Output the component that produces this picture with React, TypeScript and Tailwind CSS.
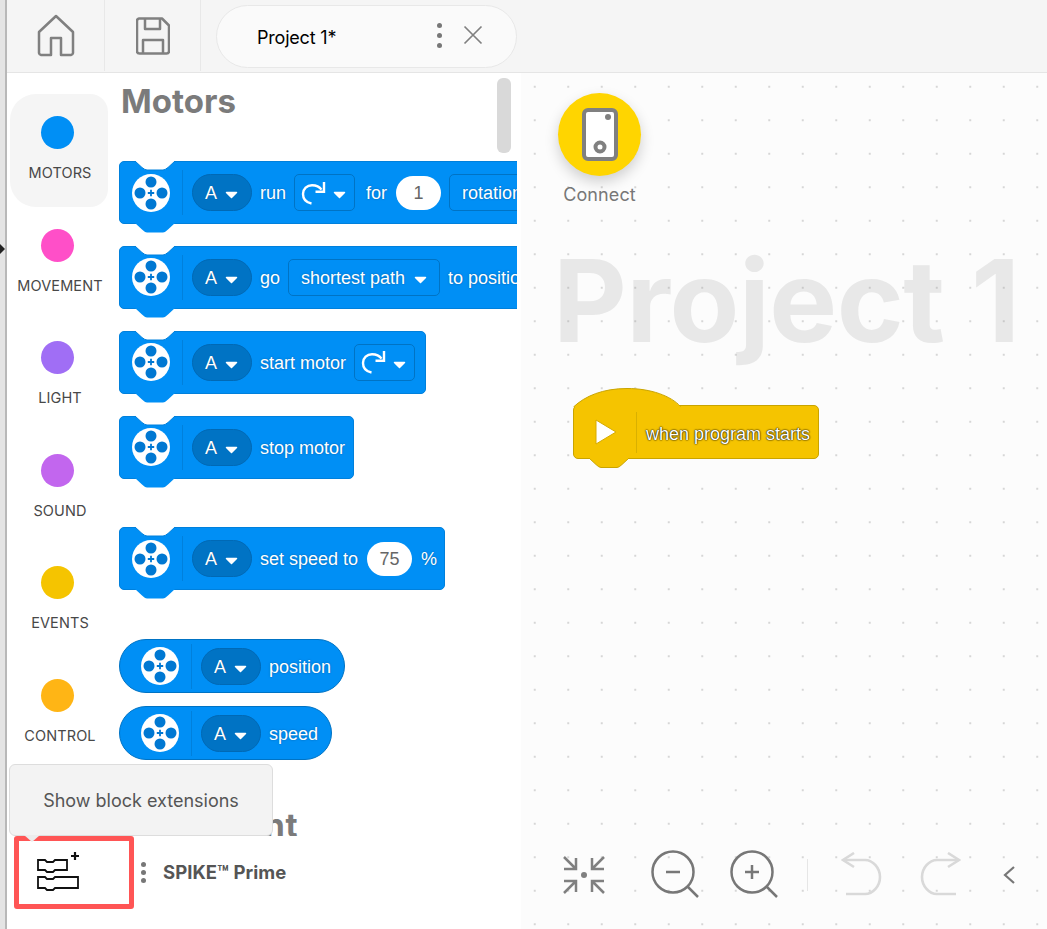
import React from "react";

const SANS = "font-['Inter','Liberation_Sans',sans-serif]";
const ARIAL = "font-['Liberation_Sans','Arial',sans-serif]";

const cats = [
  { n: "MOTORS", c: "bg-[#008ff5]", active: true },
  { n: "MOVEMENT", c: "bg-[#ff4fc8]" },
  { n: "LIGHT", c: "bg-[#a06ef5]" },
  { n: "SOUND", c: "bg-[#c266ee]" },
  { n: "EVENTS", c: "bg-[#f5c400]" },
  { n: "CONTROL", c: "bg-[#ffb515]" },
];

function MotorIcon() {
  return (
    <svg width="38" height="38" viewBox="0 0 38 38" className="shrink-0">
      <circle cx="19" cy="19" r="19" fill="#fff" />
      <circle cx="19" cy="8" r="5.5" fill="#0078d2" />
      <circle cx="19" cy="30" r="5.5" fill="#0078d2" />
      <circle cx="8" cy="19" r="5.5" fill="#0078d2" />
      <circle cx="30" cy="19" r="5.5" fill="#0078d2" />
      <path d="M19 15.8v6.4M15.8 19h6.4" stroke="#0078d2" strokeWidth="1.8" />
    </svg>
  );
}

function Caret() {
  return (
    <svg width="13" height="8" viewBox="0 0 13 8" className="shrink-0 mt-[5px]">
      <path d="M1.5 1.5h10L6.5 6.5z" fill="#fff" stroke="#fff" strokeWidth="1.5" strokeLinejoin="round" />
    </svg>
  );
}

function PortPill() {
  return (
    <div className="w-[60px] h-[37px] shrink-0 rounded-full bg-[#0073c4] border border-[#0069b5] flex items-center pl-[12px] gap-[7px]">
      <span className="text-white text-[18px] w-[13px] pt-[2px] [text-shadow:0_0_1px_#00508c]">A</span>
      <Caret />
    </div>
  );
}

function T({ children, cls = "" }: { children: React.ReactNode; cls?: string }) {
  return <span className={`text-white text-[18px] pt-[2px] whitespace-nowrap [text-shadow:0_0_2px_#0060a8] ${cls}`}>{children}</span>;
}

function Rotate() {
  return (
    <svg width="25" height="24" viewBox="0 0 24 24" className="shrink-0" fill="none" stroke="#fff" strokeWidth="2.4">
      <path d="M10 22.5C5 21.5 1.5 18 1.5 13 1.5 8 5.5 4.2 10.5 4.2c4 0 7.5 1.5 9.5 4.5" />
      <path d="M22.5 1v9.8H14" />
    </svg>
  );
}

function DirBox() {
  return (
    <div className="w-[61px] h-[37px] shrink-0 rounded-[5px] border border-[#0073c4] flex items-center pl-[6px] gap-[7px]">
      <Rotate />
      <Caret />
    </div>
  );
}

function Box({ children, w, pl = "" }: { children: React.ReactNode; w: string; pl?: string }) {
  return (
    <div className={`${w} ${pl} h-[37px] shrink-0 rounded-[5px] border border-[#0073c4] flex items-center gap-[9px]`}>
      {children}
    </div>
  );
}

function NumPill({ v, w }: { v: string; w: string }) {
  return (
    <div className={`${w} h-[34px] shrink-0 rounded-full bg-white flex items-center justify-center pt-[2px] text-[18px] text-[#666]`}>{v}</div>
  );
}

function Block({ w, mt, children }: { w: string; mt: string; children: React.ReactNode }) {
  return (
    <div className={`relative ${w} ${mt} h-[63px] shrink-0 rounded-[5px] bg-[#008ff5] border border-[#0080dc] flex items-center pl-[12px] ${ARIAL}`}>
      <svg width="40" height="10" viewBox="0 0 40 10" className="absolute -top-px left-[15px]">
        <path d="M0 0h40l-7 6.5Q30 9 28 9H12Q10 9 7 6.5z" fill="#fff" />
        <path d="M0 0 7 6.5Q10 9 12 9H28Q30 9 33 6.5L40 0" fill="none" stroke="#0080dc" />
      </svg>
      <svg width="40" height="10" viewBox="0 0 40 10" className="absolute -bottom-[10px] left-[15px]">
        <path d="M0 0h40l-7 6.5Q30 9.5 28 9.5H12Q10 9.5 7 6.5z" fill="#008ff5" />
      </svg>
      <MotorIcon />
      <div className="w-px h-[45px] bg-[#0080dc] ml-[12px] mr-[9px] shrink-0" />
      {children}
    </div>
  );
}

function Reporter({ w, mt, children }: { w: string; mt: string; children: React.ReactNode }) {
  return (
    <div className={`${w} ${mt} h-[54px] shrink-0 rounded-full bg-[#008ff5] border border-[#0073c4] flex items-center pl-[21px] ${ARIAL}`}>
      <MotorIcon />
      <div className="w-px h-[45px] bg-[#0080dc] ml-[12px] mr-[9px] shrink-0" />
      <PortPill />
      <T cls="ml-[8px]">{children}</T>
    </div>
  );
}

function Palette() {
  return (
    <div className="relative w-[408px] h-full overflow-hidden bg-white pl-[10px] shrink-0">
      <h2 className={`${SANS} text-[33px] leading-[40px] font-bold text-[#7b7b7b] ml-[2px] mt-[8px]`}>Motors</h2>
      <div className="w-[600px] flex flex-col mt-[40px]">
        <Block w="w-[600px]" mt="mt-0">
          <PortPill />
          <T cls="ml-[8px]">run</T>
          <div className="ml-[8px]"><DirBox /></div>
          <T cls="ml-[11px]">for</T>
          <div className="ml-[9px]"><NumPill v="1" w="w-[45px]" /></div>
          <div className="ml-[8px]"><Box w="w-[110px]" pl="pl-[12px]"><T>rotations</T></Box></div>
        </Block>
        <Block w="w-[600px]" mt="mt-[21.5px]">
          <PortPill />
          <T cls="ml-[8px]">go</T>
          <div className="ml-[8px]"><Box w="w-[152px]" pl="pl-[12px]"><T>shortest path</T><Caret /></Box></div>
          <T cls="ml-[8px]">to position</T>
        </Block>
        <Block w="w-[307px]" mt="mt-[22px]">
          <PortPill />
          <T cls="ml-[8px]">start motor</T>
          <div className="ml-[8px]"><DirBox /></div>
        </Block>
        <Block w="w-[235px]" mt="mt-[22px]">
          <PortPill />
          <T cls="ml-[8px]">stop motor</T>
        </Block>
        <Block w="w-[326px]" mt="mt-[48.5px]">
          <PortPill />
          <T cls="ml-[8px]">set speed to</T>
          <div className="ml-[9px]"><NumPill v="75" w="w-[45px]" /></div>
          <T cls="ml-[9px]">%</T>
        </Block>
        <Reporter w="w-[226px]" mt="mt-[49px]">position</Reporter>
        <Reporter w="w-[213px]" mt="mt-[13px]">speed</Reporter>
      </div>
      <h2 className={`${SANS} text-[33px] leading-[40px] font-bold tracking-[0.7px] text-[#7b7b7b] ml-[2px] mt-[45px]`}>Movement</h2>
      <div className="absolute left-[388px] top-[5px] w-[14px] h-[75px] rounded-[6px] bg-[#d9d9d9]" />
    </div>
  );
}

function Sidebar() {
  return (
    <div className="w-[102px] shrink-0 h-full bg-white flex flex-col pt-[21px] pl-[3px]">
      {cats.map((c) => (
        <div
          key={c.n}
          className={`w-[98px] h-[112.6px] shrink-0 flex flex-col items-center pt-[22px] ${c.active ? "bg-[#f5f5f5] rounded-l-[26px] rounded-r-[18px]" : ""}`}
        >
          <div className={`w-[33px] h-[33px] rounded-full ${c.c} -ml-[3px]`} />
          <div className={`${SANS} mt-[15px] text-[14.5px] tracking-[0.1px] leading-[18px] text-[#484848] whitespace-nowrap ml-[2px]`}>{c.n}</div>
        </div>
      ))}
    </div>
  );
}

function ExtIcon() {
  return (
    <svg width="44" height="44" viewBox="0 0 44 44" fill="none" stroke="#111" strokeWidth="1.8">
      <path d="M1 10h7l2 2h6l2-2h12v10H18l-2 2h-6l-2-2H1z" />
      <path d="M1 27h7l2 2h6l2-2h23v11H18l-2 2h-6l-2-2H1z" />
      <path d="M38 2v8M34 6h8" strokeWidth="2.2" />
    </svg>
  );
}

function Canvas() {
  return (
    <div className="relative flex-1 h-full overflow-hidden bg-[#fcfcfc] bg-[radial-gradient(circle,#d6d6d6_1px,transparent_1.3px)] bg-[size:33.5px_33.5px] bg-[position:-3px_-3px]">
      <div className={`absolute left-[32px] top-[155px] text-[114px] leading-[145px] font-bold tracking-[-0.5px] text-[#8a8a8a]/[0.17] whitespace-nowrap ${SANS}`}>Project 1</div>

      <div className="absolute left-[37px] top-[20px] flex flex-col items-center w-[83px]">
        <div className="w-[83px] h-[83px] rounded-full bg-[#ffd500] shadow-[0_6px_14px_rgba(0,0,0,0.18)] flex items-center justify-center">
          <svg width="36" height="54" viewBox="0 0 36 54">
            <rect x="2" y="2" width="32" height="49" rx="4" fill="#fff" stroke="#808080" strokeWidth="4" />
            <circle cx="26" cy="9" r="3" fill="#808080" />
            <circle cx="18" cy="39" r="4.5" fill="#fff" stroke="#808080" strokeWidth="4" />
          </svg>
        </div>
        <div className={`${SANS} mt-[7px] text-[18px] leading-[24px] text-[#777] tracking-[0.1px]`}>Connect</div>
      </div>

      <div className={`absolute left-[52px] top-[332px] w-[246px] h-[54px] rounded-[5px] bg-[#f5c400] border border-[#c9a400] flex items-center ${ARIAL}`}>
        <svg width="108" height="19" viewBox="0 0 108 19" className="absolute -top-[18px] -left-px">
          <path d="M0.5 19C12 8 30 0.5 54 0.5 78 0.5 98 8 107.5 19z" fill="#f5c400" />
          <path d="M0.5 19C12 8 30 0.5 54 0.5 78 0.5 98 8 107.5 18.5" fill="none" stroke="#c9a400" />
        </svg>
        <svg width="40" height="10" viewBox="0 0 40 10" className="absolute -bottom-[10px] left-[15px]">
          <path d="M0 0h40l-7 6.5Q30 9.5 28 9.5H12Q10 9.5 7 6.5z" fill="#f5c400" stroke="#c9a400" />
          <path d="M1 0h38" stroke="#f5c400" strokeWidth="2" />
        </svg>
        <svg width="22" height="26" viewBox="0 0 22 26" className="ml-[21px] shrink-0">
          <path d="M1 1l20 12L1 25z" fill="#fff" stroke="#d6ab00" />
        </svg>
        <div className="w-px h-[41px] bg-[#d9b000] ml-[19px] shrink-0" />
        <span className="ml-[9px] pt-[4px] text-white text-[18px] whitespace-nowrap [text-shadow:0_0_1px_#000,0_0_2px_#000]">when program starts</span>
      </div>

      <div className="absolute left-[40px] top-[777px] flex items-center">
        <svg width="46" height="46" viewBox="0 0 46 46" fill="none" stroke="#808080" strokeWidth="2.5">
          <path d="M3 5l12 12M15 6v11H3M43 5L31 17M31 6v11h12M3 41l12-12M15 40V29H3M43 41L31 29M31 40V29h12" />
          <circle cx="23" cy="23" r="3" fill="#808080" stroke="none" />
        </svg>
        <svg width="50" height="50" viewBox="0 0 50 50" fill="none" stroke="#777" strokeWidth="2.5" className="ml-[44px]">
          <circle cx="22" cy="22" r="20.5" />
          <path d="M36 36l11 11" />
          <path d="M15 22h14" strokeWidth="2.5" />
        </svg>
        <svg width="50" height="50" viewBox="0 0 50 50" fill="none" stroke="#777" strokeWidth="2.5" className="ml-[29px]">
          <circle cx="22" cy="22" r="20.5" />
          <path d="M36 36l11 11" />
          <path d="M15 22h14M22 15v14" />
        </svg>
        <div className="w-px h-[32px] bg-[#e6e6e6] ml-[27px]" />
        <svg width="42" height="46" viewBox="0 0 42 46" fill="none" stroke="#d9d9d9" strokeWidth="2.6" className="ml-[33px]">
          <path d="M13 1L2 8l11 7" />
          <path d="M2 8h22c8 0 15 8 15 17s-7 17-15 17H5" />
        </svg>
        <svg width="42" height="46" viewBox="0 0 42 46" fill="none" stroke="#d9d9d9" strokeWidth="2.6" className="ml-[36px]">
          <path d="M29 1l11 7-11 7" />
          <path d="M40 8H18C10 8 3 16 3 25s7 17 15 17h19" />
        </svg>
        <svg width="14" height="20" viewBox="0 0 14 20" fill="none" stroke="#777" strokeWidth="2.2" className="ml-[41px]">
          <path d="M12 2L3 10l9 8" />
        </svg>
      </div>
    </div>
  );
}

export default function App() {
  return (
    <div className="relative w-[1047px] h-[929px] overflow-hidden flex bg-white">
      <div className="relative w-[7px] h-full shrink-0 bg-[#e4e4e4] border-r-2 border-[#b8b8b8]">
        <svg width="5" height="12" viewBox="0 0 5 12" className="absolute left-0 top-[243px]">
          <path d="M0 1l5 5-5 5z" fill="#222" />
        </svg>
      </div>
      <div className="flex-1 h-full flex flex-col min-w-0">
        <header className="h-[73px] shrink-0 bg-[#f5f5f5] border-b border-[#e5e5e5] flex">
          <div className="w-[98px] h-[71px] border-r border-[#e8e8e8] flex items-center justify-center shrink-0">
            <svg width="38" height="43" viewBox="0 0 38 43" fill="none" stroke="#808080" strokeWidth="2.5" strokeLinejoin="round" className="-mt-[1px]">
              <path d="M19 2L2 18v21a2.5 2.5 0 0 0 2 2h10V24h10v17h10a2.5 2.5 0 0 0 2-2V18z" />
            </svg>
          </div>
          <div className="w-[96px] h-[71px] border-r border-[#e8e8e8] flex items-center justify-center shrink-0">
            <svg width="34" height="38" viewBox="0 0 34 38" fill="none" stroke="#808080" strokeWidth="2.5" strokeLinejoin="round">
              <path d="M3 1.5h23l7 7V34a2.5 2.5 0 0 1-2.5 2.5h-27A2.5 2.5 0 0 1 1 34V4a2.5 2.5 0 0 1 2-2.5z" />
              <path d="M9 2v10h15V2M7 36V23h20v13" />
            </svg>
          </div>
          <div className="ml-[15px] mt-[5px] w-[301px] h-[63px] rounded-full bg-[#fafafa] border border-[#e8e8e8] flex items-center pl-[40px] shrink-0">
            <span className={`${SANS} text-[18px] tracking-[-0.2px] text-black flex-1 pt-[2px]`}>Project 1*</span>
            <div className="flex flex-col gap-[5px] -mt-[3px]">
              <div className="w-[5px] h-[5px] rounded-full bg-[#777]" />
              <div className="w-[5px] h-[5px] rounded-full bg-[#777]" />
              <div className="w-[5px] h-[5px] rounded-full bg-[#777]" />
            </div>
            <svg width="20" height="20" viewBox="0 0 20 20" stroke="#808080" strokeWidth="1.7" className="ml-[21px] mr-[33px] -mt-[3px]">
              <path d="M1.5 1.5l17 17M18.5 1.5l-17 17" />
            </svg>
          </div>
        </header>
        <div className="relative flex-1 min-h-0 flex">
          <Sidebar />
          <Palette />
          <div className="w-[4px] h-full bg-white shrink-0" />
          <Canvas />
          <div className="absolute left-0 top-[763px] w-[514px] h-[93px] bg-white">
            <div className="h-[73px] flex items-center">
              <div className="ml-[7px] w-[120px] h-[73px] border-[5px] border-[#ff5555] rounded-[3px] pl-[18px] pt-[9px]">
                <ExtIcon />
              </div>
              <div className="ml-[7px] flex flex-col gap-[3px]">
                <div className="w-[5px] h-[5px] rounded-full bg-[#777]" />
                <div className="w-[5px] h-[5px] rounded-full bg-[#777]" />
                <div className="w-[5px] h-[5px] rounded-full bg-[#777]" />
              </div>
              <span className={`${SANS} ml-[17px] text-[18.5px] font-bold tracking-[0.05px] text-[#555]`}>SPIKE™ Prime</span>
            </div>
          </div>
          <div className={`absolute left-[2px] top-[691px] w-[264px] h-[72px] bg-[#f3f3f3] border border-[#dddddd] rounded-[6px] flex items-center justify-center ${SANS} text-[18px] text-[#555]`}>
            Show block extensions
            <svg width="16" height="8" viewBox="0 0 16 8" className="absolute left-[14px] -bottom-[8px]">
              <path d="M0 0h16L8 7z" fill="#ececec" />
            </svg>
          </div>
        </div>
      </div>
    </div>
  );
}
